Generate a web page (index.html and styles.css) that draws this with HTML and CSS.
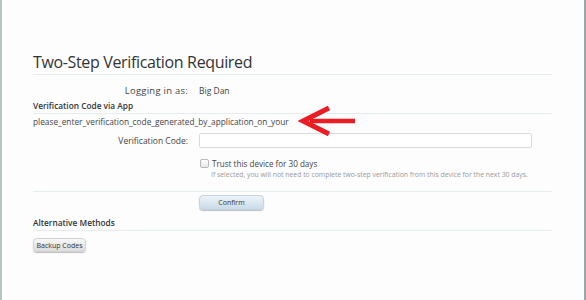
FILE: index.html
```html
<!DOCTYPE html>
<html>
<head>
<meta charset="utf-8">
<link rel="stylesheet" href="styles.css">
</head>
<body>
<div class="frame">
  <div class="content">
    <h1 class="title">Two-Step Verification Required</h1>
    <div class="row login-row">
      <span class="label wide">Logging in as:</span>
      <span class="value">Big Dan</span>
    </div>
    <h2 class="section">Verification Code via App</h2>
    <div class="instr-wrap">
      <p class="instr">please_enter_verification_code_generated_by_application_on_your</p>
      <svg class="arrow" width="60" height="32" viewBox="0 0 60 32">
        <path d="M12 16 L57 16" stroke="#ec1c24" stroke-width="4.5" fill="none"/>
        <path d="M31 3 L5 16 L31 29" stroke="#ec1c24" stroke-width="5" fill="none" stroke-linejoin="miter" stroke-miterlimit="10"/>
      </svg>
    </div>
    <div class="row code-row">
      <label class="label">Verification Code:</label>
      <input class="code-input" type="text">
    </div>
    <div class="row trust-row">
      <span class="label"></span>
      <div class="trust">
        <div class="check-line"><span class="checkbox"></span><span class="trust-text">Trust this device for 30 days</span></div>
        <div class="help">If selected, you will not need to complete two-step verification from this device for the next 30 days.</div>
      </div>
    </div>
    <div class="row confirm-row">
      <span class="label"></span>
      <button class="btn btn-blue">Confirm</button>
    </div>
    <h2 class="section alt">Alternative Methods</h2>
    <div class="backup-row">
      <button class="btn btn-gray">Backup Codes</button>
    </div>
  </div>
</div>
</body>
</html>
```
FILE: styles.css
```css
html, body {
  margin: 0;
  padding: 0;
  background: #fdfdfe;
}
body {
  font-family: "Open Sans", "DejaVu Sans", sans-serif;
  color: #3a3a3a;
}
.frame {
  width: 586px;
  height: 300px;
  box-sizing: border-box;
  border-left: 2px solid #b9c3c6;
  border-right: 2px solid #9aa6a8;
  background: #fdfdfe;
  overflow: hidden;
}
.content {
  margin-left: 31px;
  width: 519px;
  padding-top: 50px;
}
.title {
  margin: 0;
  font-weight: 400;
  font-size: 16px;
  letter-spacing: -0.35px;
  line-height: 24px;
  color: #333;
  border-bottom: 1px solid #e4ecee;
}
.row {
  display: flex;
  align-items: center;
}
.label {
  width: 155px;
  text-align: right;
  flex: none;
  font-size: 8.5px;
  color: #444;
}
.label.wide {
  font-size: 9.4px;
  letter-spacing: 0.3px;
}
.value {
  margin-left: 11px;
  font-size: 8.5px;
  color: #444;
}
.login-row {
  margin-top: 6px;
  height: 18px;
}
.section {
  margin: 0;
  font-size: 8.3px;
  font-weight: 600;
  line-height: 14px;
  color: #333;
  border-bottom: 1px solid #e4ecee;
}
.instr-wrap {
  position: relative;
  height: 15px;
}
.instr {
  margin: 0;
  font-size: 8.3px;
  line-height: 15px;
  color: #444;
}
.arrow {
  position: absolute;
  left: 265px;
  top: -9px;
}
.code-row {
  margin-top: 4px;
  height: 15px;
}
.code-input {
  display: block;
  margin: 0 0 0 11px;
  width: 333px;
  height: 15px;
  box-sizing: border-box;
  border: 1px solid #d6dcde;
  border-radius: 2px;
  background: #fff;
  padding: 0;
}
.trust-row {
  margin-top: 8px;
  align-items: flex-start;
}
.trust {
  margin-left: 12px;
}
.check-line {
  display: flex;
  align-items: center;
  height: 14px;
}
.checkbox {
  width: 7px;
  height: 7px;
  border: 1px solid #b8b8b8;
  border-radius: 2px;
  background: linear-gradient(#fff, #e8e8e8);
  margin-right: 3px;
}
.trust-text {
  font-size: 8.1px;
  color: #444;
}
.help {
  font-size: 6.85px;
  color: #9a9a9a;
  line-height: 10px;
  margin-left: 11px;
}
.confirm-row {
  border-top: 1px solid #e4ecee;
  margin-top: 11px;
  padding-top: 3px;
  height: 15px;
}
.btn {
  display: block;
  font-family: "Open Sans", "DejaVu Sans", sans-serif;
  font-size: 7px;
  color: #333;
  height: 15px;
  padding: 0;
  border-radius: 4px;
  box-shadow: 0 1px 1px rgba(0,0,0,0.25);
}
.btn-blue {
  margin-left: 11px;
  width: 65px;
  border: 1px solid #c3d3df;
  background: linear-gradient(#eef4f8, #c8dbe8);
}
.alt {
  margin-top: 6px;
}
.backup-row {
  display: flex;
  padding-top: 7px;
}
.btn-gray {
  width: 53px;
  height: 14px;
  border: 1px solid #d2d2d2;
  background: linear-gradient(#f8f8f8, #dcdcdc);
}
```
